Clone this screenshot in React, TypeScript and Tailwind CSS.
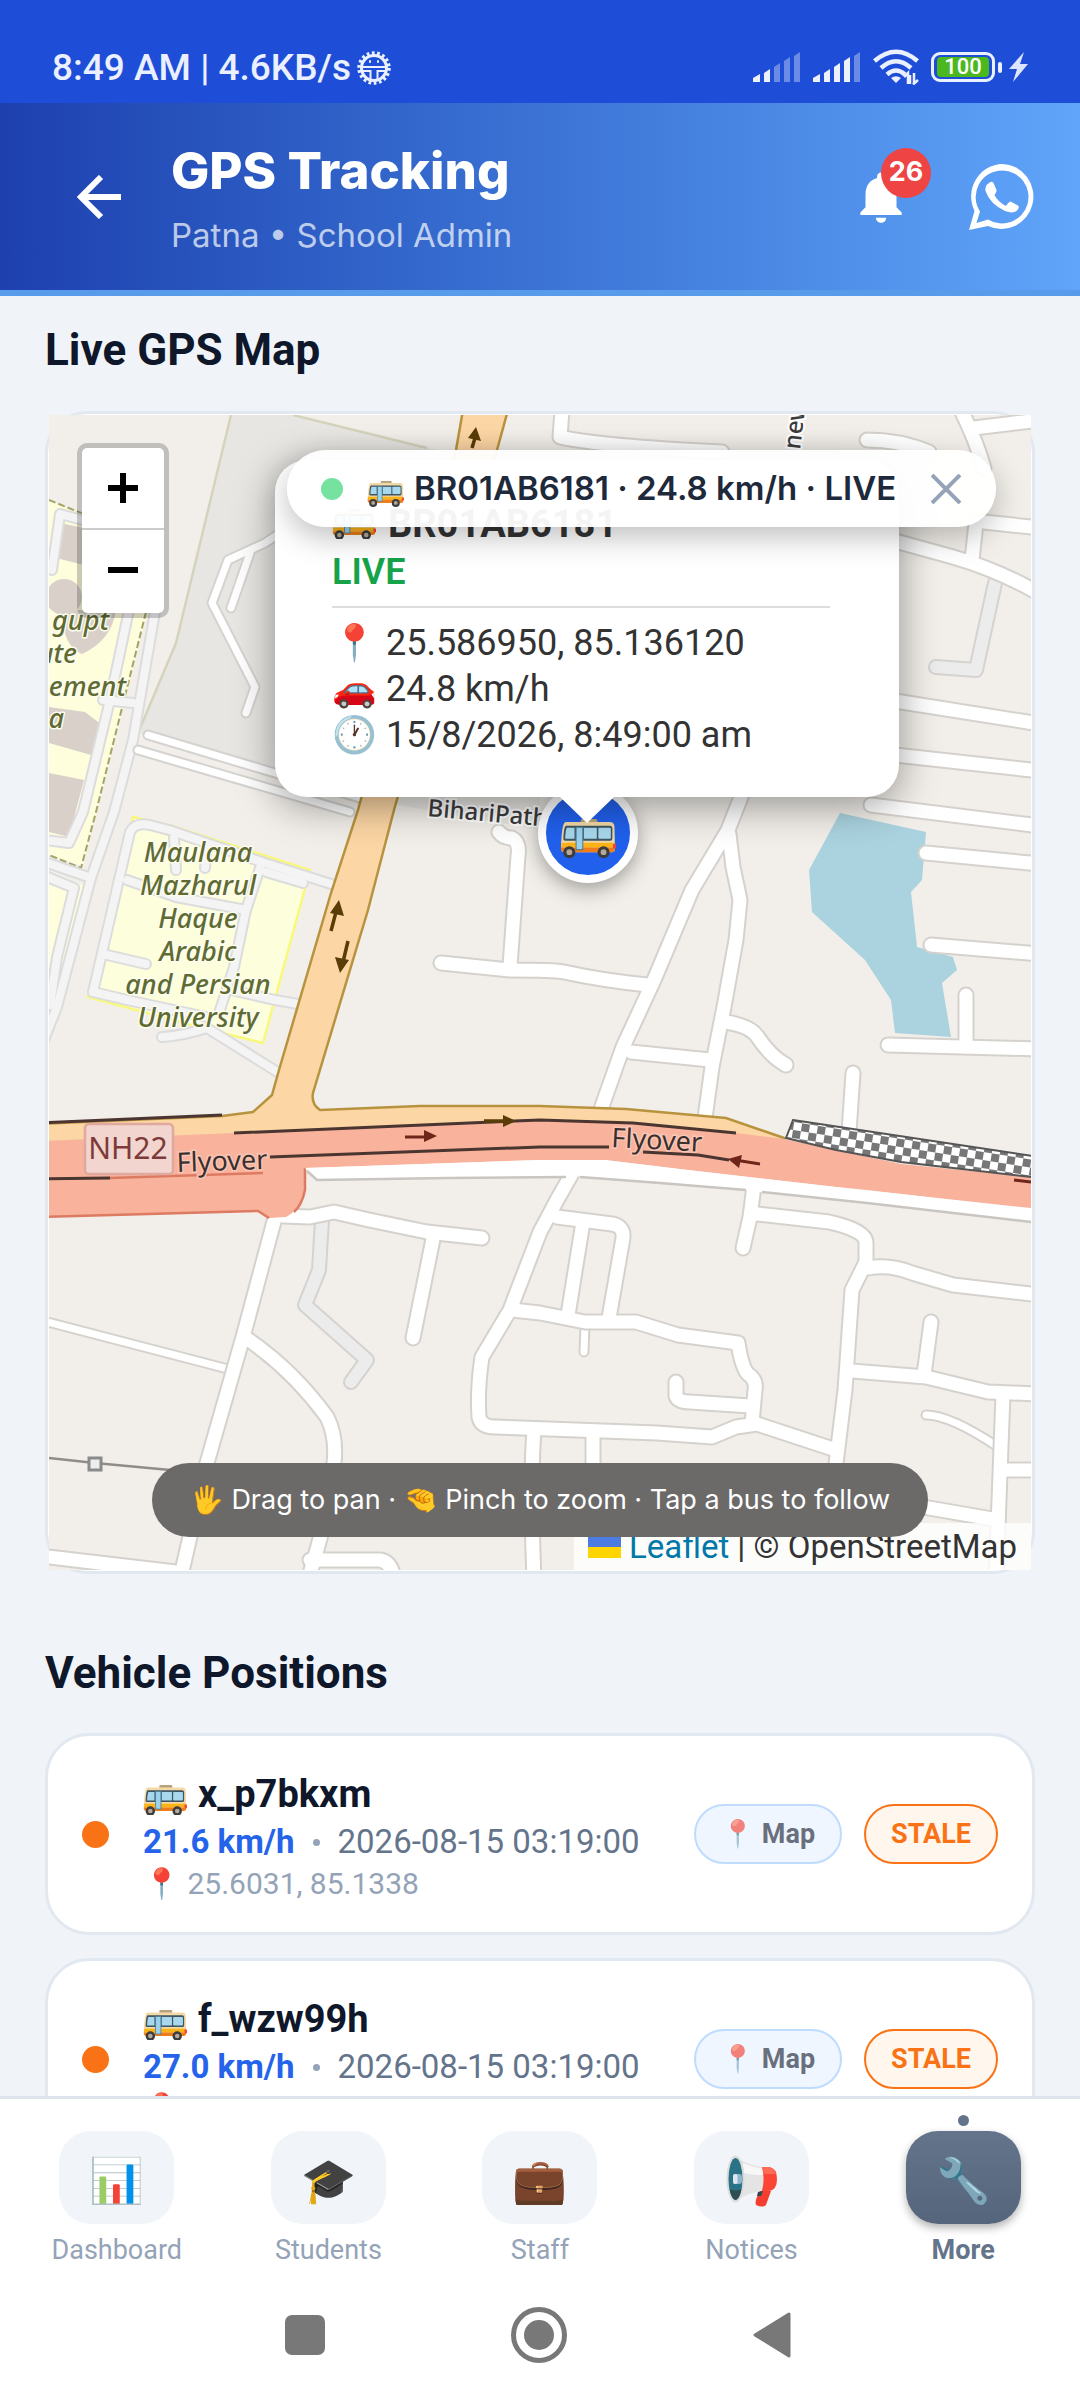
import type { ReactNode } from 'react';
import { MdNotifications } from 'react-icons/md';

interface Vehicle {
  id: string;
  name: string;
  speed: string;
  updatedAt: string;
  position: string;
}

const vehicles: Vehicle[] = [
  { id: 'v1', name: 'x_p7bkxm', speed: '21.6 km/h', updatedAt: '2026-08-15 03:19:00', position: '25.6031, 85.1338' },
  { id: 'v2', name: 'f_wzw99h', speed: '27.0 km/h', updatedAt: '2026-08-15 03:19:00', position: '25.6031, 85.1338' },
];

// Road centre lines, grouped by drawn width
const minorRoads = [
  'M741 797L728 830L692 890L654 980L623 1047L600 1112',
  'M729 834L733 867L740 900L736 940L724 1007L712 1067L705 1118',
  'M441 963L510 970Q555 970 564 972Q600 980 647 985',
  'M499 832Q503 838 512 838Q520 842 518 856L510 966',
  'M631 1052L710 1060',
  'M726 1022Q750 1026 757 1036Q770 1056 786 1065',
  'M871 805L1040 826',
  'M926 853L1040 864',
  'M931 945L1040 954',
  'M888 1045L1040 1049',
  'M966 995V1047',
  'M853 1073L849 1132',
  'M562 410L560 437Q600 446 722 452',
  'M867 440Q900 440 929 452',
  'M960 408Q976 440 984 468',
  'M974 428L1040 420',
  'M976 523L972 560',
  'M984 522L1040 528',
  'M895 541L953 557Q998 570 1040 594',
  'M895 701L1040 724',
  'M895 755L1040 771',
  'M276 1214L243 1337L207 1463L180 1580',
  'M246 1338Q293 1370 327 1417Q337 1437 334 1463Q330 1510 308 1580',
  'M283 1216L310 1217L334 1212L369 1220L427 1232L482 1238',
  'M434 1234L413 1338',
  'M574 1170L557 1200L540 1232L510 1310L482 1357Q477 1390 479 1417Q481 1427 495 1427L657 1433L712 1437L736 1427L757 1424L836 1450',
  'M557 1217L612 1224Q624 1226 623 1238L609 1318',
  'M583 1222L568 1315',
  'M512 1310L540 1313L585 1322L636 1322L678 1335L738 1343Q742 1368 748 1374Q757 1380 755 1390L752 1423',
  'M676 1382V1396Q678 1402 690 1402L750 1406',
  'M754 1186L750 1217L743 1248',
  'M757 1214L829 1222Q865 1230 866 1242V1262L852 1290L845 1390L834 1480',
  'M868 1268Q890 1264 912 1273L953 1285L1040 1295',
  'M852 1371L926 1377L988 1392L1040 1394',
  'M931 1322L924 1375',
  'M1003 1394L996 1580',
  'M1003 1470H1040',
  'M534 1430Q530 1480 534 1580',
  'M593 1435V1480',
  'M40 1556L176 1572',
  'M310 1560L380 1560Q392 1562 394 1580',
  'M900 1503L998 1520',
];

const narrowRoads = [
  'M40 1320L228 1369',
  'M585 1324L584 1352',
  'M926 1415Q950 1415 998 1447',
];

const serviceRoads = [
  'M322 1220L319 1270L305 1305L367 1360L351 1382',
  'M995 583L976 670L936 667',
  'M280 533L265 543L228 560L212 603L255 687L246 713',
  'M250 553L231 608',
  'M148 735L275 773L360 798',
  'M138 750L275 790L350 812',
];

const campusRoads = [
  'M129 610L110 700L83 812L69 843L45 840',
  'M155 612L133 740L114 812L91 878L57 1007L40 1050',
  'M103 700L133 703',
  'M52 570L60 514L90 522',
  'M45 862L91 878',
  'M45 876L74 888L57 957L50 1005',
  'M93 992L130 832Q135 822 150 825L169 830L265 863L331 884',
  'M93 992L127 1000L206 1017',
  'M162 1037Q182 1036 207 1028L279 1073',
  'M262 862L246 910L234 967L220 1010',
  'M127 880L176 897L246 910',
  'M107 955L146 964',
  'M231 990L275 1000L298 1004',
  'M266 872L303 883',
  'M176 870L174 838',
  'M205 868L207 846',
];

const campusLabel = ['Maulana', 'Mazharul', 'Haque', 'Arabic', 'and Persian', 'University'];

const navItems = [
  { label: 'Dashboard', icon: '📊' },
  { label: 'Students', icon: '🎓' },
  { label: 'Staff', icon: '💼' },
  { label: 'Notices', icon: <MegaphoneIcon /> },
  { label: 'More', icon: '🔧', active: true },
];

function BusIcon({ className }: { className: string }) {
  return (
    <svg viewBox="0 0 54 38" className={`shrink-0 ${className}`} aria-hidden="true">
      <rect x="20" y="0" width="16" height="4" rx="1.5" fill="#b9a27c" />
      <path d="M6 3H48Q52 3 52.500 7L53 29Q53 32 50 32H4Q1 32 1 29V24Q2 8 3.500 5Q4 3 6 3Z" fill="#f3d9a6" />
      <path d="M1.500 23H53V27.500H1.200Z" fill="#fcb316" />
      <path d="M1 27.500H53V29Q53 32 50 32H4Q1 32 1 29Z" fill="#ee7d1a" />
      <path d="M6 6.500H48Q50.500 6.500 50.500 9V19Q50.500 21 48.500 21H5Q3 21 3.200 19Q3.600 11 4.600 8Q5 6.500 6 6.500Z" fill="#3f5561" />
      <path d="M6.500 8.500H14V19H5Q5.200 12 6.500 8.500Z" fill="#a8d8ee" />
      <rect x="23" y="8.500" width="12.500" height="10.500" fill="#a8d8ee" />
      <rect x="37" y="8.500" width="12" height="10.500" rx="1" fill="#a8d8ee" />
      <rect x="15.500" y="8" width="6.500" height="21.500" fill="#9bd2ee" stroke="#4c7f97" strokeWidth="1" />
      <rect x="51" y="24" width="3" height="4.500" rx="1" fill="#f4433c" />
      <circle cx="9" cy="32" r="5.800" fill="#3c3c3c" />
      <circle cx="9" cy="32" r="2.800" fill="#b5a898" />
      <circle cx="42" cy="32" r="5.800" fill="#3c3c3c" />
      <circle cx="42" cy="32" r="2.800" fill="#b5a898" />
    </svg>
  );
}

function MegaphoneIcon() {
  return (
    <svg viewBox="0 0 52 52" className="size-[52px]" aria-hidden="true">
      <path d="M9 1Q22 11 37 12V36Q22 37 9 47Z" fill="#e4e4e4" />
      <path d="M17 8Q27 13 37 13V20Q26 20 18 18Z" fill="#f7f7f7" />
      <ellipse cx="9.500" cy="24" rx="9" ry="23.500" fill="#dcdcdc" />
      <ellipse cx="9.500" cy="24" rx="7" ry="21" fill="#2a7285" />
      <path d="M3.500 34Q9.500 37 15.500 34Q13 45 9.500 45Q6 45 3.500 34Z" fill="#2f4d52" />
      <rect x="7" y="19" width="9" height="10" rx="3" fill="#8fb6cc" />
      <rect x="7" y="19" width="4.500" height="10" rx="2" fill="#e0e6ef" />
      <path d="M36 12H43Q51 13 51 24Q51 35 43 36H36Q39 24 36 12Z" fill="#fb4537" />
      <path d="M36 12H43Q48 13 50 19H38Z" fill="#fd6d56" />
      <path d="M34 36H45L40 50Q37 53 30 50Q29 46 31 42Z" fill="#f23d31" />
      <path d="M32 37L37 36L35 41L31 41Z" fill="#37474f" />
    </svg>
  );
}

function WhatsAppIcon() {
  return (
    <svg viewBox="0 0 66 66" className="size-[66px]" aria-hidden="true">
      <path
        fillRule="evenodd"
        fill="#fff"
        d="M33.500 0A32 32.500 0 1 1 19 62L0 66L5.500 47A32 32.500 0 0 1 33.500 0ZM33.500 6.500A26.500 26.500 0 0 0 11 47.500L7.500 59L19 55.500A26.500 26.500 0 1 0 33.500 6.500Z"
      />
      <path
        fill="#fff"
        d="M21.500 18Q24 17 25 20L27.500 26Q28 27.500 25.500 31Q29 38 37 42Q40 37.500 41.500 37.500L49 41.500Q51 43 48 46.500Q44 50 36 47Q21 40 16.500 27Q15.500 21 21.500 18Z"
      />
    </svg>
  );
}

function Signal({ level }: { level: number }) {
  const bars = [8, 13, 19, 25, 30];
  return (
    <svg viewBox="0 0 48 30" className="h-[30px] w-12" aria-hidden="true">
      {bars.map((height, i) => (
        <path
          key={height}
          d={`M${i * 10 + (i === 0 ? 0 : 1)} 30V${30 - height + 4}L${i * 10 + 7} ${30 - height}V30Z`}
          fill="#fff"
          opacity={i < level ? 0.92 : 0.35}
        />
      ))}
    </svg>
  );
}

function StatusBar() {
  return (
    <div className="flex h-[103px] shrink-0 items-end justify-between bg-[#1e4dd8] px-[52px] text-[#eaf0ff]">
      <div className="flex items-center gap-[6px] pb-[11px]">
        <span className="text-[37px] leading-[48px] font-medium">8:49 AM | 4.6KB/s</span>
        <svg viewBox="0 0 34 34" className="size-[34px]" fill="none" stroke="currentColor" aria-hidden="true">
          <circle cx="17" cy="17" r="15" strokeWidth="3.500" strokeDasharray="2.700 2.540" />
          <circle cx="17" cy="17" r="12.500" strokeWidth="3" />
          <path d="M5 16H29M13.500 19V29M20.500 19V29M5 20H13.500M20.500 20H29" strokeWidth="2" />
          <path d="M12 10.500H14M20 10.500H22" strokeWidth="2.500" />
        </svg>
      </div>
      <div className="flex items-center gap-3 pb-[18px]">
        <Signal level={2} />
        <Signal level={4} />
        <svg viewBox="0 0 46 36" className="h-9 w-[46px]" fill="none" stroke="currentColor" strokeWidth="4.500" aria-hidden="true">
          <path d="M1.500 12Q23 -6.500 44.500 12" />
          <path d="M8 19Q23 5.500 38 19" />
          <path d="M14 25.500Q23 17.500 32 25.500" />
          <path d="M18 29Q23 25.500 28 29L23 34Z" fill="currentColor" stroke="none" />
          <path d="M31 28L35 24V35M41 35V24M37 35V26M45 31L40 35.500" strokeWidth="2.500" />
        </svg>
        <div className="flex items-center gap-[3px]">
          <div className="flex h-[30px] w-16 items-center justify-center rounded-[9px] border-[3px] border-[#eaf0ff] p-[3px]">
            <span className="flex h-5 w-full items-center justify-center rounded-sm bg-[#4cb820] text-[22px] leading-5 font-medium text-white">
              100
            </span>
          </div>
          <div className="h-[11px] w-1 rounded-sm bg-[#eaf0ff]" />
          <svg viewBox="0 0 19 30" className="ml-1 h-[30px] w-[19px]" fill="#dbe5ff" aria-hidden="true">
            <path d="M15 0L0 17H8L4 30L19 12H11Z" />
          </svg>
        </div>
      </div>
    </div>
  );
}

function Header() {
  return (
    <header className="flex h-[193px] shrink-0 items-center border-b-[6px] border-[#579bea] bg-gradient-to-r from-[#1e40af] to-[#60a5fa] pr-[45px] pl-[77px] text-white">
      <button type="button" aria-label="Back" className="size-11">
        <svg viewBox="0 0 44 44" fill="none" stroke="currentColor" strokeWidth="6" aria-hidden="true">
          <path d="M24 2L4 22L24 42M4 22H44" />
        </svg>
      </button>
      <div className="ml-[50px] flex-1 pt-2 font-['Inter',sans-serif]">
        <h1 className="text-[51px] leading-[68px] font-extrabold">GPS Tracking</h1>
        <p className="text-[33px] leading-[60px] text-white/70">Patna • School Admin</p>
      </div>
      <button type="button" aria-label="Notifications" className="relative mr-[57px]">
        <MdNotifications className="size-[62px]" />
        <span className="absolute -top-[18px] -right-[19px] flex size-[50px] items-center justify-center rounded-full bg-[#ef4444] font-['Inter',sans-serif] text-[27px] font-bold">
          26
        </span>
      </button>
      <button type="button" aria-label="WhatsApp">
        <WhatsAppIcon />
      </button>
    </header>
  );
}

function Roads({ paths, width, fill, casing }: { paths: string[]; width: number; fill: string; casing: string }) {
  return (
    <g fill="none" strokeLinecap="round" strokeLinejoin="round">
      {paths.map((d) => (
        <path key={d} d={d} stroke={casing} strokeWidth={width + 4} />
      ))}
      {paths.map((d) => (
        <path key={d} d={d} stroke={fill} strokeWidth={width} />
      ))}
    </g>
  );
}

function MapTiles() {
  return (
    <svg
      viewBox="49 415 982 1155"
      preserveAspectRatio="xMidYMid slice"
      className="absolute inset-0 h-full w-full font-['Noto_Sans',sans-serif]"
      role="img"
      aria-label="Street map"
    >
      <defs>
        <pattern id="checker" width="16" height="16" patternUnits="userSpaceOnUse" patternTransform="rotate(9)">
          <rect width="16" height="16" fill="#fff" />
          <rect width="8" height="8" fill="#777" />
          <rect x="8" y="8" width="8" height="8" fill="#777" />
        </pattern>
      </defs>
      <rect x="49" y="415" width="982" height="1155" fill="#f2efea" />
      <path d="M231 415H293L427 448L540 470V830L358 798L275 773L138 733L176 643Z" fill="#e8e6e2" />
      <path d="M231 415L176 643L133 745M293 415L427 448" fill="none" stroke="#d6d3bd" strokeWidth="2.500" />

      {/* campus grounds and buildings */}
      <path d="M49 500L83 515L160 540L146 617L125 700L83 866L49 855Z" fill="#fefddc" />
      <path d="M49 876L88 886L58 1000L49 990Z" fill="#fefddc" />
      <path d="M133 817L172 826L310 870L263 1043L210 1030L88 997Z" fill="#fdfedb" stroke="#f8f87c" strokeWidth="2.500" />
      <g fill="#d8d0c9">
        <path d="M60 523L84 528V565L56 558Z" />
        <circle cx="64" cy="597" r="18" />
        <path d="M62 610H116Q112 640 82 654Q62 646 62 610Z" />
        <path d="M49 707L85 712L102 725L98 757L49 743Z" />
        <path d="M49 773L84 780L69 837L49 832Z" />
      </g>
      <path d="M49 500L86 515M146 612L96 812L81 868L49 855" fill="none" stroke="#a3a468" strokeWidth="2" strokeDasharray="7 3" />
      <Roads paths={campusRoads} width={8} fill="#f4f4f4" casing="#dcdcdc" />
      <Roads paths={serviceRoads.slice(0, 2)} width={12} fill="#ececec" casing="#d5d3d0" />
      <Roads paths={serviceRoads.slice(2)} width={7} fill="#fff" casing="#d5d3d0" />
      <path
        d="M840 813L926 832L922 880L911 892L917 947L953 957L957 970L942 983L951 1037L895 1033L891 1000L865 960L812 912L809 870Z"
        fill="#aad3df"
      />
      <Roads paths={narrowRoads} width={7} fill="#fff" casing="#d5d2cd" />
      <Roads paths={minorRoads} width={13} fill="#fff" casing="#d5d2cd" />

      {/* trunk road */}
      <path
        d="M463 410L456 450L358 810L331 893L279 1070L272 1095L253 1112L222 1116L40 1124V1150L540 1140L784 1142L784 1138L726 1118L626 1109L540 1106H420L320 1110Q311 1104 313 1093L368 910L394 810L497 450L508 410Z"
        fill="#fcd6a4"
        stroke="#b8933f"
        strokeWidth="2.500"
      />
      <path
        d="M40 1141L234 1133L400 1126L540 1120L633 1123L736 1133L784 1139L836 1150L901 1164L1040 1178V1210L867 1190L836 1187L688 1170L605 1160H540L305 1168V1190Q300 1210 286 1217L269 1218L258 1211L40 1217Z"
        fill="#f9b29c"
      />
      <path d="M305 1168V1190Q302 1205 294 1212M269 1218L258 1211L40 1217M110 1178L263 1173" fill="none" stroke="#dc7a62" strokeWidth="2.500" />
      <path d="M305 1168L540 1160H605L688 1170L836 1187L1040 1209V1222L867 1203L760 1192L660 1183L574 1176L448 1178L317 1180Z" fill="#fff" />
      <path d="M307 1171L317 1180L448 1178L566 1177M580 1177L660 1183L746 1190M762 1192L867 1203L1040 1223" fill="none" stroke="#c9c5c0" strokeWidth="2.500" />
      <path
        d="M40 1123L222 1115M234 1133L540 1120L633 1123L736 1133M270 1157L540 1147H609M643 1152L698 1155L729 1160M40 1179L110 1178"
        fill="none"
        stroke="#4a3531"
        strokeWidth="3"
      />
      <path d="M793 1120L1040 1157V1178L901 1162L836 1150L786 1138Z" fill="url(#checker)" stroke="#555" strokeWidth="2" />
      <g fill="none" stroke="#70251a" strokeWidth="3">
        <path d="M405 1137H430M760 1164L735 1160M1014 1180L1031 1182" />
      </g>
      <path d="M437 1136L424 1130V1142ZM728 1159L742 1155L739 1168Z" fill="#70251a" />
      <path d="M331 931L336 912M348 941L343 962M472 448L475 438M484 1121H505" fill="none" stroke="#5a3d06" strokeWidth="3.500" />
      <path d="M339 900L330 913L344 916ZM340 973L335 957L349 960ZM476 427L468 438L481 441ZM516 1121L503 1115V1127Z" fill="#5a3d06" />

      {/* power line */}
      <path d="M49 1458L95 1463L170 1470" fill="none" stroke="#8f8d89" strokeWidth="2.500" />
      <rect x="89" y="1458" width="12" height="12" fill="#eee" stroke="#8a8a8a" strokeWidth="3" />

      <g
        fill="#5f6b33"
        stroke="#fdfdf0"
        strokeWidth="3"
        strokeLinejoin="round"
        paintOrder="stroke"
        fontSize="27"
        fontWeight="500"
        fontStyle="italic"
      >
        <text x="109" y="630" textAnchor="end">gupt</text>
        <text x="77" y="663" textAnchor="end">ute</text>
        <text x="126" y="696" textAnchor="end">ement</text>
        <text x="64" y="728" textAnchor="end">a</text>
        {campusLabel.map((line, i) => (
          <text key={line} x="198" y={862 + i * 33} textAnchor="middle">
            {line}
          </text>
        ))}
      </g>
      <rect x="85" y="1124" width="88" height="50" rx="4" fill="#f3d5cf" stroke="#dfa99e" strokeWidth="2.500" />
      <text x="128" y="1159" textAnchor="middle" fontSize="30" fill="#7d3a38">
        NH22
      </text>
      <g fill="#3a2f2c" stroke="#f9c6b6" strokeWidth="3" paintOrder="stroke" fontSize="27">
        <text x="177" y="1172" transform="rotate(-2 177 1172)">Flyover</text>
        <text x="611" y="1147" transform="rotate(3 611 1147)">Flyover</text>
      </g>
      <g fill="#3c3c3c" stroke="#fff" strokeWidth="4" paintOrder="stroke" fontWeight="500" fontSize="24">
        <text x="427" y="816" transform="rotate(5 427 816)">BihariPath</text>
        <text x="800" y="450" transform="rotate(-83 800 450)">new</text>
      </g>
    </svg>
  );
}

function VehiclePopup() {
  return (
    <div className="absolute top-[45px] left-[226px] flex flex-col items-center">
      <div className="w-[624px] rounded-[32px] bg-white px-[57px] pt-10 pb-[39px] text-[36px] leading-[46px] text-[#333] shadow-[0_8px_40px_rgba(0,0,0,0.4)]">
        <div className="flex items-center gap-3 text-[38px] leading-[48px] font-bold">
          <BusIcon className="w-[44px]" />
          BR01AB6181
        </div>
        <div className="leading-[48px] font-semibold text-[#16a34a]">LIVE</div>
        <hr className="mt-[10px] mb-3 w-[498px] border-t-2 border-[#ddd]" />
        <div>📍 25.586950, 85.136120</div>
        <div>🚗 24.8 km/h</div>
        <div>🕐 15/8/2026, 8:49:00 am</div>
      </div>
      <svg viewBox="0 0 54 26" className="h-[26px] w-[54px]" aria-hidden="true">
        <path d="M0 0H54L27 26Z" fill="#fff" />
      </svg>
    </div>
  );
}

function LiveMap() {
  return (
    <section className="relative rounded-[42px] border-[3px] border-[#e2e8f0] bg-white p-px">
      <div className="relative h-[1155px] overflow-hidden">
        <MapTiles />

        <button
          type="button"
          aria-label="Follow bus"
          className="absolute top-[368px] left-[489px] flex size-[100px] items-center justify-center rounded-full border-8 border-white bg-[#2060ec] pt-3 shadow-[0_6px_20px_rgba(0,0,0,0.35)]"
        >
          <BusIcon className="w-14" />
        </button>

        <VehiclePopup />

        <div className="absolute top-7 left-7 flex flex-col rounded-[10px] border-[5px] border-black/20 bg-clip-padding">
          <button type="button" aria-label="Zoom in" className="flex h-20 w-[82px] items-center justify-center rounded-t-md bg-white">
            <svg viewBox="0 0 30 30" className="size-[30px]" aria-hidden="true">
              <path d="M12 0H18V12H30V18H18V30H12V18H0V12H12Z" />
            </svg>
          </button>
          <button
            type="button"
            aria-label="Zoom out"
            className="flex h-[85px] w-[82px] items-center justify-center rounded-b-md border-t-2 border-[#ccc] bg-white pb-1"
          >
            <svg viewBox="0 0 30 30" className="size-[30px]" aria-hidden="true">
              <path d="M0 12H30V18H0Z" />
            </svg>
          </button>
        </div>

        <div className="absolute top-[35px] left-[238px] flex h-[77px] items-center rounded-full bg-white/95 pr-[35px] pl-[34px] shadow-[0_10px_30px_rgba(0,0,0,0.25)]">
          <span className="size-[22px] rounded-full bg-[#75e2a0]" />
          <span className="ml-6 flex items-center gap-[10px] font-['Inter',sans-serif] text-[33px] font-semibold text-[#1e293b]">
            <BusIcon className="mt-3 w-[37px]" />
            BR01AB6181 · 24.8 km/h · LIVE
          </span>
          <button type="button" aria-label="Stop following" className="ml-[35px]">
            <svg viewBox="0 0 30 30" className="size-[30px]" stroke="#94a3b8" strokeWidth="4" aria-hidden="true">
              <path d="M1 1L29 29M29 1L1 29" />
            </svg>
          </button>
        </div>

        <div className="absolute right-0 bottom-0 flex h-[47px] items-center bg-white/80 pr-[14px] pl-[14px] text-[33px] text-[#333]">
          <svg viewBox="0 0 33 22" className="mr-2 h-[22px] w-[33px]" aria-hidden="true">
            <path d="M0 0H33V11H0Z" fill="#4c7be1" />
            <path d="M0 11H33V22H0Z" fill="#ffd500" />
          </svg>
          <a href="#leaflet" className="text-[#0078a8]">
            Leaflet
          </a>
          <span className="ml-2">| © OpenStreetMap</span>
        </div>

        <div className="absolute inset-x-0 bottom-[33px] flex justify-center">
          <p className="flex h-[74px] items-center rounded-full bg-[#6b6a69] px-[38px] font-['Inter',sans-serif] text-[27px] text-white">
            🖐️ Drag to pan · 🤏 Pinch to zoom · Tap a bus to follow
          </p>
        </div>
      </div>
    </section>
  );
}

function VehicleCard({ vehicle }: { vehicle: Vehicle }) {
  return (
    <article className="flex h-[202px] shrink-0 items-center rounded-[44px] border-[3px] border-[#e2e8f0] bg-white px-[34px]">
      <span className="size-[27px] rounded-full bg-[#f97316]" />
      <div className="ml-[34px] flex-1 pt-1">
        <h3 className="flex items-center gap-[11px] text-[38px] leading-[50px] font-bold text-[#0f172a]">
          <BusIcon className="mt-3 w-11" />
          {vehicle.name}
        </h3>
        <p className="flex items-center text-[33px] leading-[46px]">
          <span className="font-bold text-[#2563eb]">{vehicle.speed}</span>
          <span className="mx-[18px] size-[7px] rounded-full bg-[#94a3b8]" />
          <span className="text-[#64748b]">{vehicle.updatedAt}</span>
        </p>
        <p className="text-[30px] leading-[38px] text-[#94a3b8]">📍 {vehicle.position}</p>
      </div>
      <button
        type="button"
        className="flex h-[60px] items-center rounded-[30px] border-2 border-[#bfdbfe] bg-[#eff6ff] px-[25px] text-[27px] font-bold text-[#1f2937]"
      >
        <span className="opacity-65">📍 Map</span>
      </button>
      <span className="ml-[22px] flex h-[60px] items-center rounded-[30px] border-2 border-[#f97316] bg-[#fff7ed] px-[25px] text-[27px] font-bold text-[#f97316]">
        STALE
      </span>
    </article>
  );
}

function NavTile({ active, children }: { active?: boolean; children: ReactNode }) {
  return (
    <span
      className={`flex h-[93px] w-[115px] items-center justify-center rounded-[32px] pt-[6px] text-[44px] ${
        active ? 'bg-gradient-to-b from-[#64748b] to-[#55657c] shadow-[0_4px_8px_rgba(0,0,0,0.3)]' : 'bg-[#f1f5f9]'
      }`}
    >
      <span className={active ? 'opacity-90' : ''}>{children}</span>
    </span>
  );
}

function BottomNav() {
  return (
    <nav className="flex shrink-0 border-t-[3px] border-[#dde4ec] bg-white px-[11px] pt-8">
      {navItems.map((item) => (
        <a key={item.label} href={`#${item.label.toLowerCase()}`} className="relative flex flex-1 flex-col items-center">
          {item.active && <span className="absolute -top-4 size-[11px] rounded-full bg-[#64748b]" />}
          <NavTile active={item.active}>{item.icon}</NavTile>
          <span className={`mt-[6px] text-[27px] leading-10 ${item.active ? 'font-bold text-[#64748b]' : 'text-[#94a3b8]'}`}>
            {item.label}
          </span>
        </a>
      ))}
    </nav>
  );
}

function SystemNav() {
  return (
    <div className="flex h-[130px] shrink-0 items-center justify-center gap-[186px] bg-white pr-1">
      <button type="button" aria-label="Recent apps" className="size-10 rounded-[7px] bg-[#787878]" />
      <button type="button" aria-label="Home" className="flex size-14 items-center justify-center rounded-full border-[5px] border-[#787878]">
        <span className="size-[30px] rounded-full bg-[#787878]" />
      </button>
      <button type="button" aria-label="Go back">
        <svg viewBox="0 0 38 46" className="h-[46px] w-[38px]" aria-hidden="true">
          <path d="M2 23L36 2V44Z" fill="#787878" stroke="#787878" strokeWidth="3" strokeLinejoin="round" />
        </svg>
      </button>
    </div>
  );
}

export default function App() {
  return (
    <div className="flex h-screen flex-col overflow-hidden bg-[#f0f4f9] font-['Roboto',sans-serif]">
      <StatusBar />
      <Header />
      <main className="flex min-h-0 flex-1 flex-col overflow-hidden px-[45px] pt-7">
        <h2 className="mb-[35px] text-[44px] leading-[52px] font-bold text-[#0f172a]">Live GPS Map</h2>
        <LiveMap />
        <h2 className="mt-[73px] mb-[34px] text-[44px] leading-[52px] font-bold text-[#0f172a]">Vehicle Positions</h2>
        <div className="flex flex-col gap-[23px]">
          {vehicles.map((vehicle) => (
            <VehicleCard key={vehicle.id} vehicle={vehicle} />
          ))}
        </div>
      </main>
      <BottomNav />
      <SystemNav />
    </div>
  );
}
